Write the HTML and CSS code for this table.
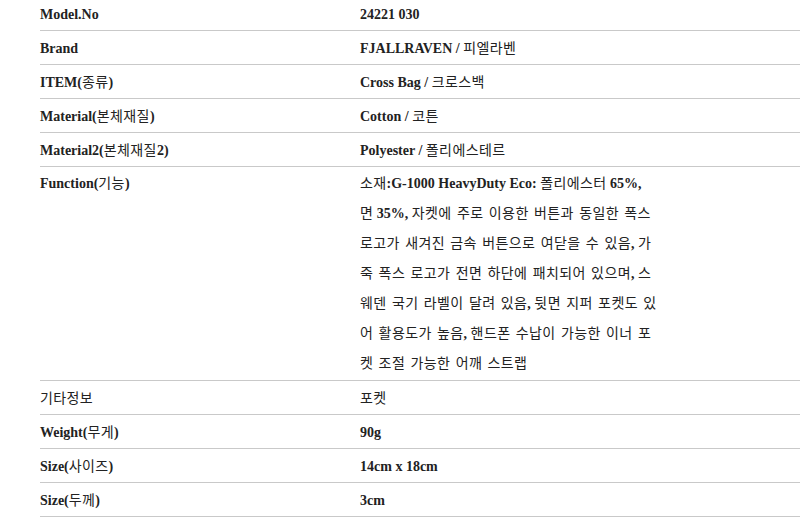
FILE: index.html
```html
<!DOCTYPE html>
<html lang="ko">
<head>
<meta charset="utf-8">
<title>Spec</title>
<link rel="stylesheet" href="styles.css">
</head>
<body>
<table class="spec">
  <tbody>
    <tr><th>Model.No</th><td>24221 030</td></tr>
    <tr><th>Brand</th><td>FJALLRAVEN / <span class="ko">피엘라벤</span></td></tr>
    <tr><th>ITEM(<span class="ko">종류</span>)</th><td>Cross Bag / <span class="ko">크로스백</span></td></tr>
    <tr><th>Material(<span class="ko">본체재질</span>)</th><td>Cotton / <span class="ko">코튼</span></td></tr>
    <tr><th>Material2(<span class="ko">본체재질</span>2)</th><td>Polyester / <span class="ko">폴리에스테르</span></td></tr>
    <tr class="multi"><th>Function(<span class="ko">기능</span>)</th><td><span class="ko">소재</span>:G-1000 HeavyDuty Eco: <span class="ko">폴리에스터</span> 65%,<br><span class="ko">면</span> 35%, <span class="ko">자켓에 주로 이용한 버튼과 동일한 폭스</span><br><span class="ko">로고가 새겨진 금속 버튼으로 여닫을 수 있음</span>, <span class="ko">가</span><br><span class="ko">죽 폭스 로고가 전면 하단에 패치되어 있으며</span>, <span class="ko">스</span><br><span class="ko">웨덴 국기 라벨이 달려 있음</span>, <span class="ko">뒷면 지퍼 포켓도 있</span><br><span class="ko">어 활용도가 높음</span>, <span class="ko">핸드폰 수납이 가능한 이너 포</span><br><span class="ko">켓 조절 가능한 어깨 스트랩</span></td></tr>
    <tr><th><span class="ko">기타정보</span></th><td><span class="ko">포켓</span></td></tr>
    <tr><th>Weight(<span class="ko">무게</span>)</th><td>90g</td></tr>
    <tr><th>Size(<span class="ko">사이즈</span>)</th><td>14cm x 18cm</td></tr>
    <tr><th>Size(<span class="ko">두께</span>)</th><td>3cm</td></tr>
  </tbody>
</table>
</body>
</html>
```

FILE: styles.css
```css
html, body {
  margin: 0;
  padding: 0;
  background: #ffffff;
}

body {
  font-family: "Liberation Serif", "Noto Sans CJK KR", serif;
  font-size: 14px;
  font-weight: bold;
  color: #222222;
  overflow: hidden;
}

.spec {
  border-collapse: collapse;
  margin: -3px 0 0 40px;
  width: 760px;
}

.spec th,
.spec td {
  text-align: left;
  vertical-align: top;
  padding: 2px 0 0;
  height: 31px;
  line-height: 31px;
  border-bottom: 1px solid #c9c9c9;
  white-space: nowrap;
}

.spec th {
  width: 320px;
  font-weight: bold;
}

.spec .multi td,
.spec .multi th {
  line-height: 30px;
  padding: 2px 0 1px;
  height: auto;
}

.ko {
  font-family: "Noto Sans CJK KR", sans-serif;
  font-weight: normal;
  line-height: 16px;
  letter-spacing: 0.4px;
  word-spacing: 1px;
}
```
